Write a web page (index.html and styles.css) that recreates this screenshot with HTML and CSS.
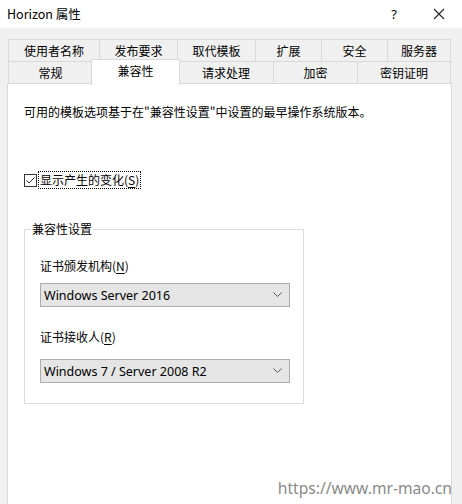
FILE: index.html
```html
<!DOCTYPE html>
<html lang="zh-CN">
<head>
<meta charset="utf-8">
<title>Horizon 属性</title>
<link rel="stylesheet" href="styles.css">
</head>
<body>
<div class="window">
  <div class="titlebar">
    <span class="title">Horizon 属性</span>
    <span class="help">?</span>
    <span class="close"><svg width="12" height="12" viewBox="0 0 12 12"><path d="M1 1L11 11M11 1L1 11" stroke="#222" stroke-width="1.1" fill="none"/></svg></span>
  </div>
  <div class="client">
    <div class="tabs">
      <div class="tabrow">
        <div class="tab w1">使用者名称</div>
        <div class="tab w2">发布要求</div>
        <div class="tab w3">取代模板</div>
        <div class="tab w4">扩展</div>
        <div class="tab w5">安全</div>
        <div class="tab w6">服务器</div>
      </div>
      <div class="tabrow">
        <div class="tab v1">常规</div>
        <div class="tab v2 selected">兼容性</div>
        <div class="tab v3">请求处理</div>
        <div class="tab v4">加密</div>
        <div class="tab v5">密钥证明</div>
      </div>
    </div>
    <div class="panel">
      <p class="desc">可用的模板选项基于在"兼容性设置"中设置的最早操作系统版本。</p>
      <label class="check">
        <span class="box"><svg width="11" height="11" viewBox="0 0 11 11"><path d="M1.5 5.5L4 8L9.5 2.5" stroke="#333" stroke-width="1" fill="none"/></svg></span>
        <span class="focus">显示产生的变化(<u>S</u>)</span>
      </label>
      <fieldset class="group">
        <legend>兼容性设置</legend>
        <div class="field-label">证书颁发机构(<u>N</u>)</div>
        <div class="combo"><span>Windows Server 2016</span><svg width="9" height="6" viewBox="0 0 9 6"><path d="M0.5 0.5L4.5 4.5L8.5 0.5" stroke="#555" stroke-width="1" fill="none"/></svg></div>
        <div class="field-label second">证书接收人(<u>R</u>)</div>
        <div class="combo second"><span>Windows 7 / Server 2008 R2</span><svg width="9" height="6" viewBox="0 0 9 6"><path d="M0.5 0.5L4.5 4.5L8.5 0.5" stroke="#555" stroke-width="1" fill="none"/></svg></div>
      </fieldset>
      <div class="watermark">https://www.mr-mao.cn</div>
    </div>
  </div>
</div>
</body>
</html>
```

FILE: styles.css
```css
html, body {
  margin: 0;
  padding: 0;
}
body {
  width: 462px;
  height: 504px;
  overflow: hidden;
  font-family: "Noto Sans CJK SC", "Noto Sans", sans-serif;
  font-size: 12px;
  color: #000;
  background: #f0f0f0;
}
.window {
  width: 462px;
  height: 504px;
  display: flex;
  flex-direction: column;
}
.titlebar {
  height: 28px;
  flex: none;
  background: #fff;
  display: flex;
  align-items: center;
  position: relative;
}
.title {
  padding-left: 7px;
  font-size: 12.5px;
  line-height: 28px;
  padding-bottom: 1px;
}
.help {
  margin-left: auto;
  width: 20px;
  text-align: center;
  font-family: "Noto Sans", sans-serif;
  font-size: 13px;
  margin-right: 29px;
}
.close {
  width: 12px;
  height: 12px;
  margin-right: 17px;
  display: flex;
}
.client {
  flex: 1;
  display: flex;
  flex-direction: column;
  padding-top: 11px;
  min-height: 0;
}
.tabs {
  margin-left: 8px;
  width: 443px;
  position: relative;
  z-index: 1;
}
.tabrow {
  display: flex;
  height: 22px;
}
.tab {
  box-sizing: border-box;
  height: 23px;
  border: 1px solid #d9d9d9;
  margin-right: -1px;
  margin-bottom: -1px;
  background: #f0f0f0;
  text-align: center;
  line-height: 21px;
  white-space: nowrap;
}
.tab:last-child {
  margin-right: 0;
}
.w1 { width: 92px; }
.w2 { width: 79px; }
.w3 { width: 79px; }
.w4 { width: 67px; }
.w5 { width: 67px; }
.w6 { width: 64px; }
.v1 { width: 85px; }
.v2 { width: 86px; }
.v3 { width: 96px; }
.v4 { width: 85px; }
.v5 { width: 94px; }
.tab.selected {
  background: #fff;
  height: 26px;
  margin-top: -2px;
  margin-left: -1px;
  margin-right: -2px;
  width: 89px;
  border-bottom: none;
  line-height: 22px;
  position: relative;
  z-index: 2;
}
.panel {
  margin-left: 7px;
  width: 445px;
  flex: 1;
  box-sizing: border-box;
  border: 1px solid #d9d9d9;
  border-bottom: none;
  background: #fff;
  padding: 19px 0 0 16px;
  position: relative;
}
.desc {
  margin: 0;
  line-height: 17px;
}
.check {
  display: flex;
  align-items: center;
  margin-top: 51px;
  height: 18px;
}
.box {
  box-sizing: border-box;
  width: 13px;
  height: 13px;
  border: 1px solid #333;
  display: flex;
  align-items: center;
  justify-content: center;
  margin-right: 1px;
}
.focus {
  border: 1px dotted #000;
  padding: 0 1px;
  line-height: 16px;
}
u {
  text-decoration: underline;
  text-underline-offset: 2px;
}
.group {
  margin: 32px 0 0 0;
  width: 280px;
  height: 183px;
  box-sizing: border-box;
  border: 1px solid #dcdcdc;
  padding: 13px 0 0 15px;
}
.group legend {
  padding: 0 1px;
  margin-left: -9px;
  line-height: 16px;
}
.field-label {
  line-height: 16px;
  margin-top: 8px;
}
.field-label.second {
  margin-top: 22px;
}
.combo {
  margin-top: 9px;
  box-sizing: border-box;
  width: 250px;
  height: 24px;
  background: #e5e5e5;
  border: 1px solid #adadad;
  display: flex;
  align-items: center;
  justify-content: space-between;
  padding: 0 7px 0 3px;
  font-family: "Noto Sans", sans-serif;
  font-size: 12.5px;
}
.combo.second {
  margin-top: 14px;
}
.watermark {
  position: absolute;
  right: -1px;
  bottom: 5px;
  font-family: "Noto Sans", sans-serif;
  font-size: 15.6px;
  color: #8a8a8a;
}
```
